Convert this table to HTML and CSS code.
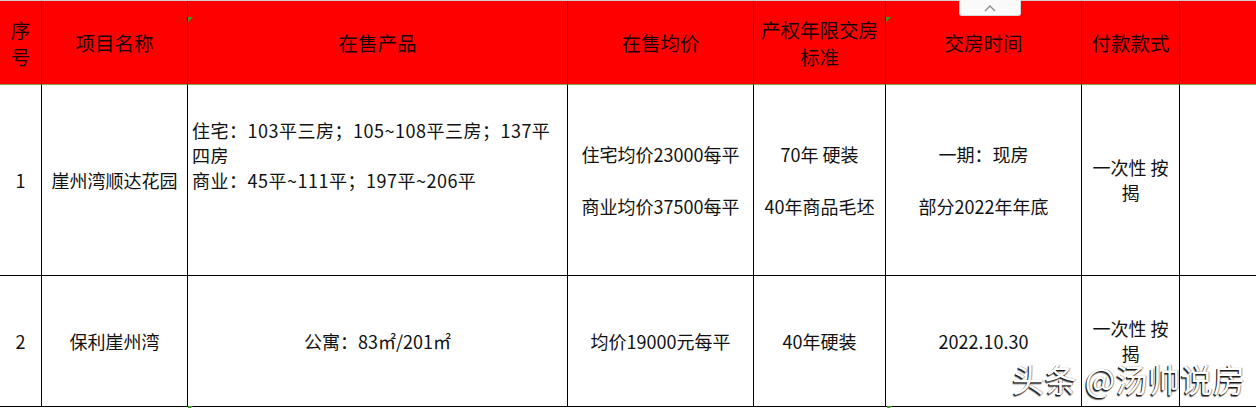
FILE: index.html
```html
<!DOCTYPE html>
<html lang="zh-CN">
<head>
<meta charset="utf-8">
<title>楼盘信息</title>
<link rel="stylesheet" href="styles.css">
</head>
<body>
<div class="sheet">
  <div class="topline"></div>
  <div class="grid">
    <div class="cell head"><span>序<br>号</span></div>
    <div class="cell head"><span>项目名称</span></div>
    <div class="cell head"><span>在售产品</span></div>
    <div class="cell head"><span>在售均价</span></div>
    <div class="cell head"><span>产权年限交房<br>标准</span></div>
    <div class="cell head"><span>交房时间</span></div>
    <div class="cell head"><span>付款款式</span></div>
    <div class="cell head last"></div>

    <div class="cell body"><span>1</span></div>
    <div class="cell body"><span>崖州湾顺达花园</span></div>
    <div class="cell body product"><span>住宅：103平三房；105~108平三房；137平<br>四房<br>商业：45平~111平；197平~206平</span></div>
    <div class="cell body spaced"><span>住宅均价23000每平<br><br>商业均价37500每平</span></div>
    <div class="cell body spaced"><span>70年 硬装<br><br>40年商品毛坯</span></div>
    <div class="cell body spaced"><span>一期：现房<br><br>部分2022年年底</span></div>
    <div class="cell body"><span>一次性 按<br>揭</span></div>
    <div class="cell body last"></div>

    <div class="cell body"><span>2</span></div>
    <div class="cell body"><span>保利崖州湾</span></div>
    <div class="cell body"><span>公寓：83㎡/201㎡</span></div>
    <div class="cell body"><span>均价19000元每平</span></div>
    <div class="cell body"><span>40年硬装</span></div>
    <div class="cell body"><span>2022.10.30</span></div>
    <div class="cell body"><span>一次性 按<br>揭</span></div>
    <div class="cell body last"></div>
  </div>

  <div class="marker m1"></div>
  <div class="marker m2"></div>
  <div class="marker m3"></div>
  <div class="marker m4"></div>

  <div class="tab">
    <svg width="14" height="8" viewBox="0 0 14 8"><polyline points="2,7 7,2 12,7" fill="none" stroke="#8a8a8a" stroke-width="1.4"/></svg>
  </div>

  <div class="watermark">头条 @汤帅说房</div>
</div>
</body>
</html>
```

FILE: styles.css
```css
html, body {
  margin: 0;
  padding: 0;
  background: #ffffff;
}

.sheet {
  position: relative;
  width: 1256px;
  height: 408px;
  overflow: hidden;
  font-family: "Noto Sans CJK SC", "Noto Sans", sans-serif;
  color: #111111;
}

.topline {
  height: 1px;
  background: #cfcfcf;
}

.grid {
  display: grid;
  grid-template-columns: 42px 146px 380px 186px 132px 196px 98px 1fr;
  grid-template-rows: 84px 191px 131px;
}

.cell {
  box-sizing: border-box;
  border-right: 1px solid #000000;
  display: flex;
  align-items: center;
  justify-content: center;
  text-align: center;
}

.cell.last {
  border-right: none;
}

.head {
  background: #ff0000;
  border-bottom: 1px solid #7fa650;
  border-right-color: #1a0000;
  color: #1a0000;
  font-size: 19.5px;
  line-height: 27px;
}

.body {
  border-bottom: 1px solid #000000;
  font-size: 18px;
  line-height: 25px;
}

.spaced {
  line-height: 26px;
}

.product {
  justify-content: flex-start;
  align-items: flex-start;
  text-align: left;
  padding: 33px 0 0 4px;
  line-height: 25px;
  letter-spacing: 0.5px;
}

.marker {
  position: absolute;
  width: 0;
  height: 0;
  border-top: 5px solid #3f9a2a;
  border-right: 5px solid transparent;
}

.m1 { left: 188px; top: 17px; }
.m2 { left: 886px; top: 17px; }
.m3 { left: 188px; top: 406px; }
.m4 { left: 887px; top: 406px; }

.tab {
  position: absolute;
  left: 959px;
  top: 0;
  width: 62px;
  height: 16px;
  box-sizing: border-box;
  background: #fafafa;
  border: 1px solid #d8d8d8;
  border-top: none;
  border-radius: 0 0 3px 3px;
  display: flex;
  align-items: center;
  justify-content: center;
}

.watermark {
  position: absolute;
  left: 1012px;
  top: 358px;
  font-size: 32px;
  line-height: 40px;
  letter-spacing: 0.5px;
  color: #ffffff;
  white-space: nowrap;
  text-shadow: -1px 1px 0 #1a1a1a, -1px 2px 1px rgba(0, 0, 0, 0.6), 1px 0 1px rgba(0, 0, 0, 0.4);
}
```
